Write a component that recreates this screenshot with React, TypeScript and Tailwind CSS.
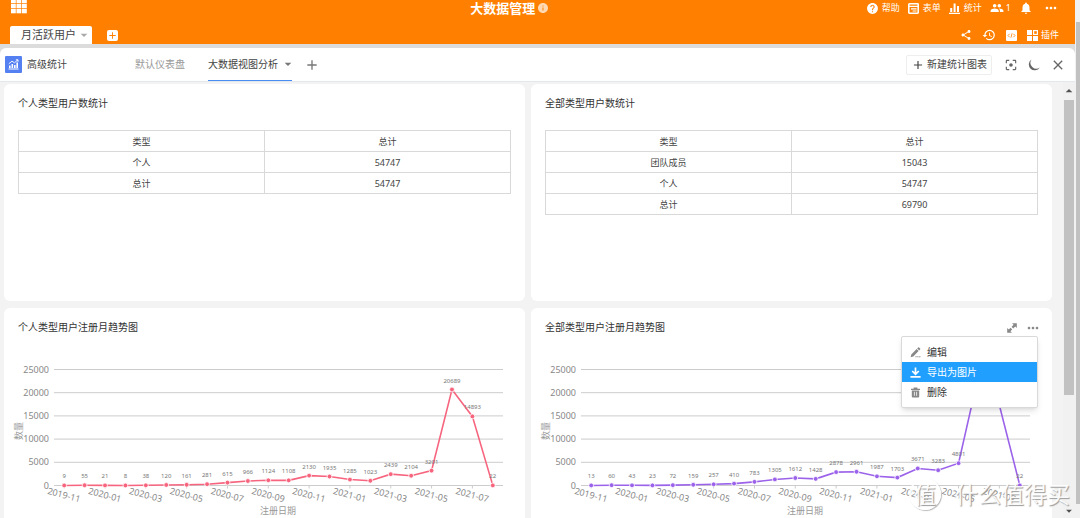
import type { ReactNode } from 'react';
import {
  MdAdd,
  MdArrowDropDown,
  MdArrowDropUp,
  MdClose,
  MdFilterCenterFocus,
  MdGroup,
  MdHelp,
  MdHistory,
  MdInfo,
  MdMoreHoriz,
  MdNotifications,
  MdShare,
} from 'react-icons/md';

const PERSONAL_ROWS = [
  ['个人', 54747],
  ['总计', 54747],
];

const ALL_ROWS = [
  ['团队成员', 15043],
  ['个人', 54747],
  ['总计', 69790],
];

const MONTHS = [
  '2019-11', '2019-12', '2020-01', '2020-02', '2020-03', '2020-04', '2020-05', '2020-06',
  '2020-07', '2020-08', '2020-09', '2020-10', '2020-11', '2020-12', '2021-01', '2021-02',
  '2021-03', '2021-04', '2021-05', '2021-06', '2021-07', '2021-08',
];

const PERSONAL_TREND = [
  9, 55, 21, 8, 38, 120, 161, 281, 615, 966, 1124, 1108, 2130, 1935, 1285, 1023, 2439, 2104, 3201,
  20689, 14893, 22,
];

const ALL_TREND = [
  13, 60, 43, 23, 72, 159, 257, 410, 783, 1305, 1612, 1428, 2878, 2961, 1987, 1703, 3671, 3283,
  4801, 24200, 17300, 22,
];

const Y_TICKS = [0, 5000, 10000, 15000, 20000, 25000];

function AppsIcon() {
  return (
    <svg width="16" height="15" viewBox="0 0 16 15" fill="currentColor">
      {[0, 5, 10].map((y) =>
        [0, 5.5, 11].map((x) => <rect key={`${x}-${y}`} x={x} y={y} width="4.8" height="4.3" />),
      )}
    </svg>
  );
}

function FormIcon() {
  return (
    <svg width="11" height="11" viewBox="0 0 11 11" fill="none" stroke="currentColor" strokeWidth="1.6">
      <rect x="0.8" y="0.8" width="9.4" height="9.4" rx="0.6" />
      <path d="M1 3.4h9M3 5.9h5.6M4.6 8h4" strokeWidth="1.1" />
    </svg>
  );
}

function StatsIcon() {
  return (
    <svg width="11" height="11" viewBox="0 0 11 11" fill="currentColor">
      <path d="M1.2 5h2v4h-2zM4.6 0.5h2V9h-2zM8 3h2v6H8zM0 9.7h11v1.2H0z" />
    </svg>
  );
}

function CodeIcon() {
  return (
    <svg width="11" height="11" viewBox="0 0 11 11" fill="none">
      <rect width="11" height="11" rx="1" fill="currentColor" />
      <path d="M3.6 3.8 2 5.5l1.6 1.7M7.4 3.8 9 5.5 7.4 7.2M6 3.4l-1 4.2" stroke="#ff8000" strokeWidth="0.8" />
    </svg>
  );
}

function PluginIcon() {
  return (
    <svg width="11" height="11" viewBox="0 0 11 11" fill="currentColor">
      <rect width="5" height="5" />
      <rect y="6" width="5" height="5" />
      <rect x="6" y="6" width="5" height="5" />
      <rect x="6.6" y="0.6" width="3.8" height="3.8" fill="none" stroke="currentColor" strokeWidth="1.2" />
    </svg>
  );
}

function LogoIcon() {
  return (
    <svg width="17" height="17" viewBox="0 0 17 17">
      <rect width="17" height="17" rx="1" fill="#5580f2" />
      <path d="M4 9.5h1.6V12H4zM6.5 8h1.6v4H6.5zM9 9h1.6v3H9zM11.4 6.5H13V12h-1.6zM3.5 12.6h10v.9h-10z" fill="#fff" />
      <path d="M3.8 7.8 7 5.2l2.4 1.6L13 3.8M10.9 3.8H13v2" fill="none" stroke="#fff" strokeWidth="0.9" />
    </svg>
  );
}

function MoonIcon() {
  return (
    <svg width="12" height="12" viewBox="0 0 12 12" fill="currentColor">
      <path d="M3.6.4A5.9 5.9 0 1 0 11.8 8.4 5.8 5.8 0 0 1 3.6.4z" />
    </svg>
  );
}

function ExpandIcon() {
  return (
    <svg width="10" height="10" viewBox="0 0 10 10" fill="currentColor">
      <path d="M5 .2h4.8V5L8.2 3.4 6.2 5.4 4.6 3.8l2-2zM.2 5v4.8H5L3.4 8.2l1.8-1.8-1.6-1.6-1.8 1.8z" />
    </svg>
  );
}

function EditIcon() {
  return (
    <svg width="11" height="11" viewBox="0 0 11 11" fill="currentColor">
      <path d="M.6 10.2l.7-2.8L6.6 2.1l2 2-5.3 5.3zM7.2 1.5l.9-.9a.7.7 0 0 1 1 0l1 1a.7.7 0 0 1 0 1l-.9.9zM5.4 9.3h1.2v1H5.4zM7.3 9.3h1.2v1H7.3zM9.2 9.3h1.2v1H9.2z" />
    </svg>
  );
}

function DownloadIcon() {
  return (
    <svg width="11" height="11" viewBox="0 0 11 11" fill="none" stroke="currentColor" strokeWidth="1.7">
      <path d="M5.5.4v6.6M2.2 4l3.3 3.2L8.8 4M.4 9.8h10.2" />
    </svg>
  );
}

function TrashIcon() {
  return (
    <svg width="11" height="11" viewBox="0 0 11 11">
      <path d="M1 1.7h2.6V.5h3.8v1.2H10v1.2H1zM1.8 3.4h7.4v6.2a1 1 0 0 1-1 1H2.8a1 1 0 0 1-1-1z" fill="currentColor" />
      <path d="M4.4 4.8v4M6.6 4.8v4" stroke="#fff" strokeWidth="0.8" />
    </svg>
  );
}

function StatTable({ rows }: { rows: (string | number)[][] }) {
  return (
    <div className="mt-5 px-3.5">
      <table className="w-full table-fixed border-collapse text-center text-[9px] leading-3 text-[#444]">
        <thead>
          <tr className="h-[21px]">
            <th className="border border-[#d9d9d9] pt-0.5 font-normal">类型</th>
            <th className="border border-[#d9d9d9] pt-0.5 font-normal">总计</th>
          </tr>
        </thead>
        <tbody>
          {rows.map(([name, total]) => (
            <tr key={name} className="h-[21px]">
              <td className="border border-[#d9d9d9] pt-0.5">{name}</td>
              <td className="border border-[#d9d9d9] pt-0.5">{total}</td>
            </tr>
          ))}
        </tbody>
      </table>
    </div>
  );
}

type TrendChartProps = {
  values: number[];
  color: string;
  // 超过该值的点不显示标签
  maxLabel?: number;
};

function TrendChart({ values, color, maxLabel = Infinity }: TrendChartProps) {
  const left = 50;
  const right = 499;
  const bottom = 151.5;
  const step = (right - left) / values.length;
  const toX = (i: number) => left + step * (i + 0.5);
  const toY = (v: number) => bottom - (v / 25000) * 116;

  return (
    <svg viewBox="0 0 521 200" className="block w-full">
      {Y_TICKS.map((tick) => (
        <g key={tick}>
          <line x1={left} x2={right} y1={toY(tick)} y2={toY(tick)} stroke="#ccc" />
          <text x="45" y={toY(tick) + 3} textAnchor="end" fontSize="9" fill="#888">
            {tick}
          </text>
        </g>
      ))}
      {MONTHS.map((month, i) =>
        i % 2 === 0 ? (
          <g key={month}>
            <line x1={toX(i)} x2={toX(i)} y1={bottom} y2={bottom + 3} stroke="#ccc" />
            <text
              textAnchor="middle"
              fontSize="9"
              fill="#888"
              transform={`translate(${toX(i) - 1} 164) rotate(15)`}
            >
              {month}
            </text>
          </g>
        ) : null,
      )}
      <text textAnchor="middle" fontSize="9" fill="#999" transform="translate(18 97) rotate(-90)">
        数量
      </text>
      <text x="274" y="180" textAnchor="middle" fontSize="9" fill="#999">
        注册日期
      </text>
      <polyline
        points={values.map((v, i) => `${toX(i)},${toY(v)}`).join(' ')}
        fill="none"
        stroke={color}
        strokeWidth="1.6"
      />
      {values.map((v, i) => (
        <circle key={MONTHS[i]} cx={toX(i)} cy={toY(v)} r="2.4" fill={color} stroke="#fff" strokeWidth="0.8" />
      ))}
      {values.map((v, i) =>
        v <= maxLabel ? (
          <text key={MONTHS[i]} x={toX(i)} y={toY(v) - 7} textAnchor="middle" fontSize="6" fill="#777">
            {v}
          </text>
        ) : null,
      )}
    </svg>
  );
}

function Panel({ title, actions, children }: { title: string; actions?: ReactNode; children: ReactNode }) {
  return (
    <section className="relative min-h-[217px] rounded-md bg-white pt-3">
      <div className="flex h-3.5 items-center justify-between pr-[11px] pl-3.5">
        <h2 className="text-[10px] leading-3.5 text-[#333]">{title}</h2>
        {actions}
      </div>
      {children}
    </section>
  );
}

function ChartMenu() {
  const item = 'flex h-5 w-full items-center gap-1.5 pl-2 text-[10px]';
  return (
    <div className="absolute top-7 right-3.5 w-[137px] rounded-xs border border-[#d9d9d9] bg-white py-[5px] shadow-md">
      <button className={`${item} text-[#333]`}>
        <span className="text-[#888]"><EditIcon /></span>
        编辑
      </button>
      <button className={`${item} bg-[#209fff] text-white`}>
        <DownloadIcon />
        导出为图片
      </button>
      <button className={`${item} text-[#333]`}>
        <span className="text-[#888]"><TrashIcon /></span>
        删除
      </button>
    </div>
  );
}

function Header() {
  return (
    <header className="bg-[#ff8000] text-white">
      <div className="flex h-4 items-center">
        <div className="w-7/16 pl-[11px]">
          <button aria-label="应用" className="-mt-1 block"><AppsIcon /></button>
        </div>
        <h1 className="text-[13px] leading-4 font-bold">大数据管理</h1>
        <MdInfo className="ml-0.5 size-3 text-[#ffd9b3]" />
        <nav className="ml-auto flex items-center gap-2 pr-4 text-[9px] leading-3">
          <a href="#help" className="flex items-center gap-[3px]"><MdHelp className="size-[13px]" />帮助</a>
          <a href="#form" className="flex items-center gap-1"><FormIcon />表单</a>
          <a href="#stats" className="flex items-center gap-1"><StatsIcon />统计</a>
          <a href="#members" className="flex items-center gap-0.5"><MdGroup className="size-3.5" />1</a>
          <button aria-label="通知"><MdNotifications className="size-3.5" /></button>
          <button aria-label="更多" className="ml-0.5"><MdMoreHoriz className="size-4" /></button>
        </nav>
      </div>
      <div className="mt-2.5 flex h-[18px] items-center pr-4 pl-2.5">
        <button className="flex h-[18px] items-center rounded-t-xs bg-white pl-[11px] text-[11px] text-[#444]">
          月活跃用户
          <MdArrowDropDown className="size-4 text-[#aaa]" />
        </button>
        <button aria-label="新建表" className="ml-[15px] rounded-xs bg-white text-[#ff8000]">
          <MdAdd className="size-[11px]" />
        </button>
        <div className="ml-auto flex items-center gap-2.5 text-[9px]">
          <button aria-label="分享"><MdShare className="size-3" /></button>
          <button aria-label="历史"><MdHistory className="size-3.5" /></button>
          <button aria-label="代码"><CodeIcon /></button>
          <button className="flex items-center gap-[3px]"><PluginIcon />插件</button>
        </div>
      </div>
    </header>
  );
}

function Toolbar() {
  return (
    <div className="flex h-[34px] shrink-0 items-center rounded-t-md border-b border-[#e3e7ee] bg-white pr-[9px] pl-[5px] text-[10px] text-[#444]">
      <LogoIcon />
      <span className="ml-[5px]">高级统计</span>
      <button className="ml-[68px] text-[#999]">默认仪表盘</button>
      <button className="ml-[23px] flex h-full items-center gap-0.5 border-b border-[#4a8df0]">
        大数据视图分析
        <MdArrowDropDown className="-mr-1 size-4 text-[#777]" />
      </button>
      <button aria-label="新建仪表盘" className="ml-3 text-[#777]"><MdAdd className="size-4" /></button>
      <button className="ml-auto flex h-5 items-center gap-0.5 rounded-xs border border-[#eee] px-1">
        <MdAdd className="size-3.5" />
        新建统计图表
      </button>
      <div className="ml-3 flex items-center gap-2.5 text-[#666]">
        <button aria-label="全屏"><MdFilterCenterFocus className="size-3.5" /></button>
        <button aria-label="深色模式"><MoonIcon /></button>
        <button aria-label="关闭"><MdClose className="size-4" /></button>
      </div>
    </div>
  );
}

function Watermark() {
  return (
    <div className="pointer-events-none absolute right-2.5 bottom-2 flex items-center gap-3.5 text-white/90 [text-shadow:1px_1px_1px_#999]">
      <span className="flex size-8 items-center justify-center rounded-full border-2 border-white/90 text-[22px] leading-8 shadow-[1px_1px_1px_#bbb]">
        值
      </span>
      <span className="text-[23px] leading-8">什么值得买</span>
    </div>
  );
}

export default function App() {
  return (
    <div className="relative flex h-screen overflow-hidden bg-[#f1f1f1] font-['Noto_Sans','Noto_Sans_CJK_SC',sans-serif]">
      <div className="flex min-w-0 flex-1 flex-col">
        <Header />
        <div className="flex min-h-0 flex-1 flex-col bg-[#dcdcdc] pt-1">
          <Toolbar />
          <div className="flex min-h-0 flex-1 bg-[#f3f3f3]">
            <main className="grid min-w-0 flex-1 grid-cols-2 content-start gap-x-1.5 gap-y-[7px] overflow-hidden pt-0.5 pr-[11px] pl-1">
              <Panel title="个人类型用户数统计">
                <StatTable rows={PERSONAL_ROWS} />
              </Panel>
              <Panel title="全部类型用户数统计">
                <StatTable rows={ALL_ROWS} />
              </Panel>
              <Panel title="个人类型用户注册月趋势图">
                <TrendChart values={PERSONAL_TREND} color="#f7647e" />
              </Panel>
              <Panel
                title="全部类型用户注册月趋势图"
                actions={
                  <div className="flex items-center gap-2 pt-0.5 text-[#888]">
                    <button aria-label="放大"><ExpandIcon /></button>
                    <button aria-label="更多操作"><MdMoreHoriz className="size-4" /></button>
                  </div>
                }
              >
                <TrendChart values={ALL_TREND} color="#9b62ea" maxLabel={10000} />
                <ChartMenu />
              </Panel>
            </main>
            {/* 内容区滚动条 */}
            <div className="flex w-3 flex-col items-center bg-[#f1f1f1] text-[#505050]">
              <MdArrowDropUp className="my-px size-4" />
              <div className="flex w-full flex-1 px-px">
                <div className="h-[73%] w-full bg-[#c1c1c1]" />
              </div>
              <MdArrowDropDown className="size-3.5" />
            </div>
          </div>
        </div>
      </div>
      {/* 页面滚动条 */}
      <div className="flex w-[5px] flex-col overflow-hidden bg-[#f1f1f1] pl-px text-[#505050]">
        <MdArrowDropUp className="mt-0.5 mb-1 size-4 shrink-0" />
        <div className="flex-1 bg-[#c1c1c1]" />
        <MdArrowDropDown className="size-3.5 shrink-0" />
      </div>
      <Watermark />
    </div>
  );
}
